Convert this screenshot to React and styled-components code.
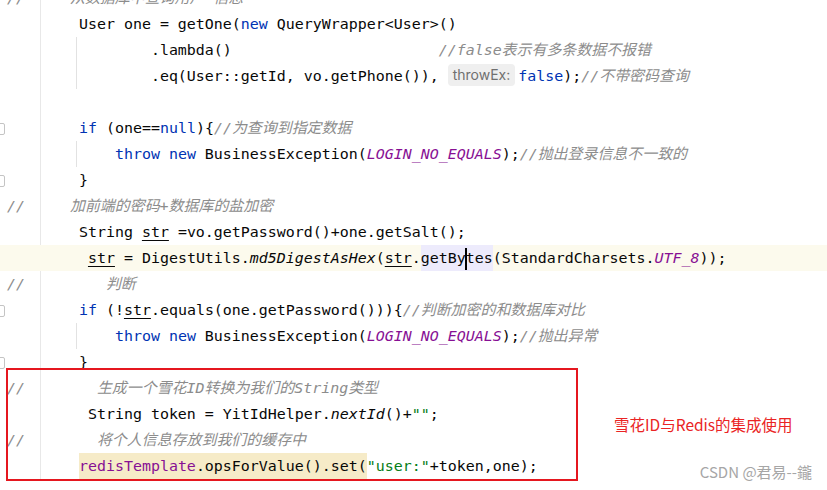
import React from 'react';
import styled, { createGlobalStyle, css } from 'styled-components';

const GlobalStyle = createGlobalStyle`
    html, body {
        margin: 0;
        padding: 0;
        background: #ffffff;
        overflow: hidden;
    }
`;

const Page = styled.div`
    position: relative;
    width: 827px;
    height: 490px;
    overflow: hidden;
    background: #ffffff;
`;

const Editor = styled.div`
    margin-top: -15px;
    font-family: "DejaVu Sans Mono", "Noto Sans CJK SC", monospace;
    font-size: 14.95px;
    color: #080808;
    background-image: linear-gradient(#e8e8e8, #e8e8e8);
    background-size: 1px 100%;
    background-position: 40px 0;
    background-repeat: no-repeat;
`;

const Line = styled.div`
    position: relative;
    height: 26px;
    line-height: 26px;
    padding-left: 7px;
    white-space: pre;
    ${p => p.$current && css`
        background-color: #fcfaed;
    `}
    ${p => p.$guide && css`
        background-image: linear-gradient(#e2e2e2, #e2e2e2);
        background-size: 1px 100%;
        background-position: 76px 0;
        background-repeat: no-repeat;
    `}
    ${p => p.$fold && css`
        &::before {
            content: '';
            position: absolute;
            left: -6px;
            top: 8px;
            width: 9px;
            height: 10px;
            border: 1px solid #c4c4c4;
            border-radius: 2px;
            background: #ffffff;
        }
    `}
`;

const Keyword = styled.span`
    color: #0033b3;
`;

const Comment = styled.span`
    color: #8c8c8c;
    font-style: italic;
`;

const Constant = styled.span`
    color: #871094;
    font-style: italic;
`;

const Field = styled.span`
    color: #871094;
`;

const Str = styled.span`
    color: #067d17;
`;

const StaticCall = styled.span`
    font-style: italic;
`;

const Reassigned = styled.span`
    text-decoration: underline;
    text-decoration-thickness: 1px;
    text-underline-offset: 3px;
`;

const Usage = styled.span`
    display: inline-block;
    height: 26px;
    background: #edebfc;
`;

const Warn = styled.span`
    display: inline-block;
    height: 26px;
    background: #f6ebc8;
`;

const Caret = styled.span`
    display: inline-block;
    width: 2px;
    height: 22px;
    margin: 0 -1px;
    vertical-align: middle;
    background: #000000;
`;

const Hint = styled.span`
    display: inline-block;
    height: 22px;
    line-height: 22px;
    padding: 0 5px;
    margin-right: 3px;
    border-radius: 4px;
    background: #efefef;
    color: #707070;
    font-family: Inter, "Noto Sans", sans-serif;
    font-size: 14px;
    vertical-align: 1px;
`;

const Group = styled.div`
    display: flex;
    align-items: center;
`;

const Boxed = styled.div`
    position: relative;
    width: 614px;

    &::after {
        content: '';
        position: absolute;
        left: 6px;
        top: -7px;
        width: 572px;
        height: 113px;
        border: 2px solid #e5171f;
        box-sizing: border-box;
        pointer-events: none;
    }
`;

const Note = styled.div`
    margin-bottom: 7px;
    font-family: "Noto Sans CJK SC", sans-serif;
    font-size: 15.5px;
    color: #ea2424;
    white-space: nowrap;
`;

const Watermark = styled.div`
    position: absolute;
    right: 15px;
    bottom: 8px;
    font-family: "Noto Sans CJK SC", sans-serif;
    font-size: 15px;
    color: #a6a6a6;
    white-space: nowrap;
`;

export default function App() {
    return (
        <Page>
            <GlobalStyle />
            <Editor>
                <Line><Comment>{'//     从数据库中查询用户 信息'}</Comment></Line>
                <Line>{'        User one = getOne('}<Keyword>new</Keyword>{' QueryWrapper<User>()'}</Line>
                <Line $guide>{'                .lambda()                       '}<Comment>//false表示有多条数据不报错</Comment></Line>
                <Line $guide>
                    {'                .eq(User::getId, vo.getPhone()), '}
                    <Hint>throwEx:</Hint>
                    <Keyword>false</Keyword>{');'}<Comment>//不带密码查询</Comment>
                </Line>
                <Line />
                <Line $fold>
                    {'        '}<Keyword>if</Keyword>{' (one=='}<Keyword>null</Keyword>{'){'}<Comment>//为查询到指定数据</Comment>
                </Line>
                <Line $guide>
                    {'            '}<Keyword>throw</Keyword>{' '}<Keyword>new</Keyword>{' BusinessException('}
                    <Constant>LOGIN_NO_EQUALS</Constant>{');'}<Comment>//抛出登录信息不一致的</Comment>
                </Line>
                <Line $fold>{'        }'}</Line>
                <Line><Comment>{'//     加前端的密码+数据库的盐加密'}</Comment></Line>
                <Line>{'        String '}<Reassigned>str</Reassigned>{' =vo.getPassword()+one.getSalt();'}</Line>
                <Line $current>
                    {'         '}<Reassigned>str</Reassigned>{' = DigestUtils.'}<StaticCall>md5DigestAsHex</StaticCall>{'('}
                    <Reassigned>str</Reassigned>{'.'}<Usage>getBy<Caret />tes</Usage>{'(StandardCharsets.'}
                    <Constant>UTF_8</Constant>{'));'}
                </Line>
                <Line><Comment>{'//         判断'}</Comment></Line>
                <Line $fold>
                    {'        '}<Keyword>if</Keyword>{' (!'}<Reassigned>str</Reassigned>{'.equals(one.getPassword())){'}
                    <Comment>//判断加密的和数据库对比</Comment>
                </Line>
                <Line $guide>
                    {'            '}<Keyword>throw</Keyword>{' '}<Keyword>new</Keyword>{' BusinessException('}
                    <Constant>LOGIN_NO_EQUALS</Constant>{');'}<Comment>//抛出异常</Comment>
                </Line>
                <Line $fold>{'        }'}</Line>
                <Group>
                    <Boxed>
                        <Line><Comment>{'//        生成一个雪花ID转换为我们的String类型'}</Comment></Line>
                        <Line>
                            {'         String token = YitIdHelper.'}<StaticCall>nextId</StaticCall>{'()+'}<Str>""</Str>{';'}
                        </Line>
                        <Line><Comment>{'//        将个人信息存放到我们的缓存中'}</Comment></Line>
                        <Line>
                            {'        '}<Warn><Field>redisTemplate</Field>.opsForValue().set(</Warn>
                            <Str>"user:"</Str>{'+token,one);'}
                        </Line>
                    </Boxed>
                    <Note>雪花ID与Redis的集成使用</Note>
                </Group>
            </Editor>
            <Watermark>CSDN @君易--鑨</Watermark>
        </Page>
    );
}
